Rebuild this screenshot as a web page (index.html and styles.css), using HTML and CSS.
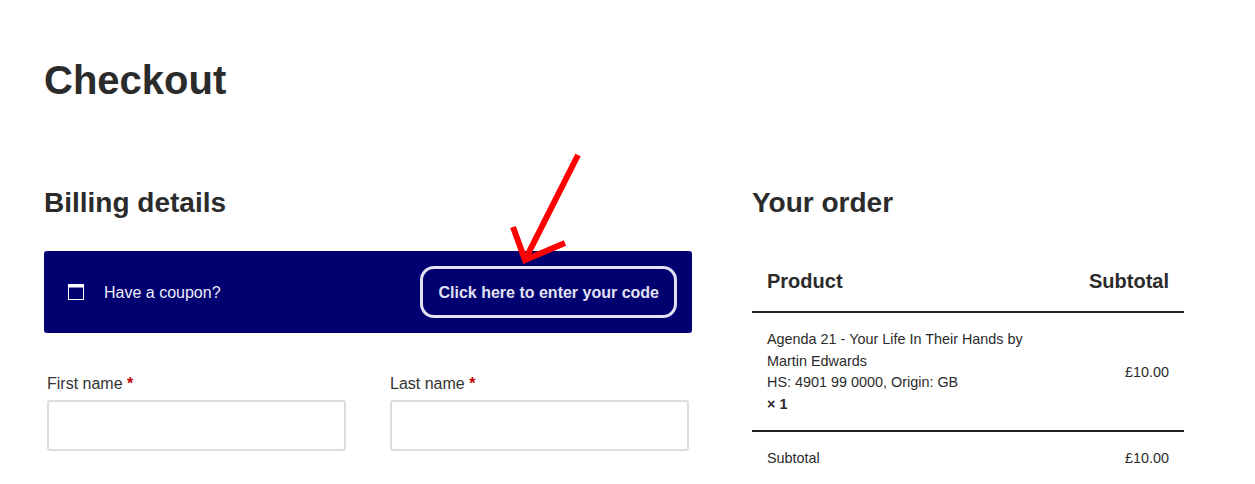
FILE: index.html
```html
<!DOCTYPE html>
<html lang="en">
<head>
    <meta charset="UTF-8">
    <title>Checkout</title>
    <link rel="stylesheet" href="styles.css">
</head>
<body>
    <div class="page">
        <h1 class="page-title">Checkout</h1>
        <div class="checkout">
            <div class="billing">
                <h2 class="section-title">Billing details</h2>
                <div class="coupon">
                    <div class="coupon-text">
                        <svg class="coupon-icon" width="16" height="16" viewBox="0 0 16 16">
                            <rect x="0.5" y="0.5" width="15" height="15" fill="none" stroke="#fff"/>
                            <rect x="0" y="0" width="16" height="3.5" fill="#fff"/>
                        </svg>
                        <span class="coupon-label">Have a coupon?</span>
                    </div>
                    <a class="coupon-button" href="#">Click here to enter your code</a>
                </div>
                <div class="fields">
                    <div class="field">
                        <label>First name <span class="required">*</span></label>
                        <input type="text">
                    </div>
                    <div class="field">
                        <label>Last name <span class="required">*</span></label>
                        <input type="text">
                    </div>
                </div>
            </div>
            <div class="order">
                <h2 class="section-title">Your order</h2>
                <div class="order-head">
                    <div>Product</div>
                    <div>Subtotal</div>
                </div>
                <div class="order-item">
                    <div class="item-name">
                        Agenda 21 - Your Life In Their Hands by Martin Edwards
                        <div class="item-meta">HS: 4901 99 0000, Origin: GB</div>
                        <div class="item-qty">× 1</div>
                    </div>
                    <div class="item-price">£10.00</div>
                </div>
                <div class="order-total">
                    <div>Subtotal</div>
                    <div>£10.00</div>
                </div>
            </div>
        </div>
        <!-- Red arrow drawn over the page -->
        <svg class="arrow" width="80" height="120" viewBox="0 0 80 120">
            <path d="M68 3 L15 108" fill="none" stroke="#ff0000" stroke-width="6"/>
            <path d="M3 75 L15 108 L55 91" fill="none" stroke="#ff0000" stroke-width="6"/>
        </svg>
    </div>
</body>
</html>
```

FILE: styles.css
```css
html, body {
    margin: 0;
    height: 484px;
    overflow: hidden;
    background-color: #fff;
}
body {
    font-family: "Liberation Sans", Arial, sans-serif;
    font-size: 16px;
    color: #2b2b2b;
}
.page {
    position: relative;
    padding: 57px 71px 0 44px;
}
.page-title {
    margin: 0 0 82px;
    font-size: 40px;
    line-height: 46px;
    font-weight: bold;
}
.checkout {
    display: flex;
    gap: 60px;
}
.billing {
    width: 648px;
}
.order {
    width: 432px;
}
.section-title {
    margin: 0 0 30px;
    font-size: 28px;
    line-height: 36px;
    font-weight: bold;
}
.coupon {
    display: flex;
    justify-content: space-between;
    align-items: center;
    height: 82px;
    padding: 0 15px 0 24px;
    box-sizing: border-box;
    background-color: #000070;
    border-radius: 3px;
    color: #eeeef8;
}
.coupon-text {
    display: flex;
    align-items: center;
    gap: 20px;
}
.coupon-icon {
    display: block;
}
.coupon-label {
    padding-top: 2px;
}
.coupon-button {
    display: block;
    padding: 0 15px;
    height: 52px;
    line-height: 47px;
    box-sizing: border-box;
    border: 3px solid #e2e2f2;
    border-radius: 14px;
    color: #e2e2f2;
    font-weight: bold;
    text-decoration: none;
}
.fields {
    display: flex;
    gap: 38px;
    margin-top: 36px;
}
.field {
    width: 305px;
    padding: 3px;
    box-sizing: border-box;
}
.field label {
    display: block;
    margin-bottom: 4px;
    line-height: 24px;
    color: #333;
}
.field input {
    display: block;
    width: 100%;
    height: 51px;
    box-sizing: border-box;
    border: 2px solid #ddd;
    border-radius: 3px;
    background-color: #fff;
}
.required {
    color: #c00000;
    font-weight: bold;
}
.order-head {
    display: flex;
    justify-content: space-between;
    padding: 15px 15px 15px;
    height: 62px;
    box-sizing: border-box;
    line-height: 30px;
    font-size: 20px;
    font-weight: bold;
    border-bottom: 2px solid #222;
}
.order-item {
    display: flex;
    justify-content: space-between;
    align-items: center;
    padding: 16px 15px 15px;
    font-size: 14.4px;
    line-height: 21.6px;
    color: #2b2b2b;
    border-bottom: 2px solid #222;
}
.item-name {
    width: 270px;
}
.item-qty {
    font-weight: bold;
}
.item-price {
    padding-top: 2px;
}
.order-total {
    display: flex;
    justify-content: space-between;
    padding: 16px 15px;
    font-size: 14.4px;
    line-height: 21.6px;
}
.arrow {
    position: absolute;
    left: 510px;
    top: 152px;
}
```
